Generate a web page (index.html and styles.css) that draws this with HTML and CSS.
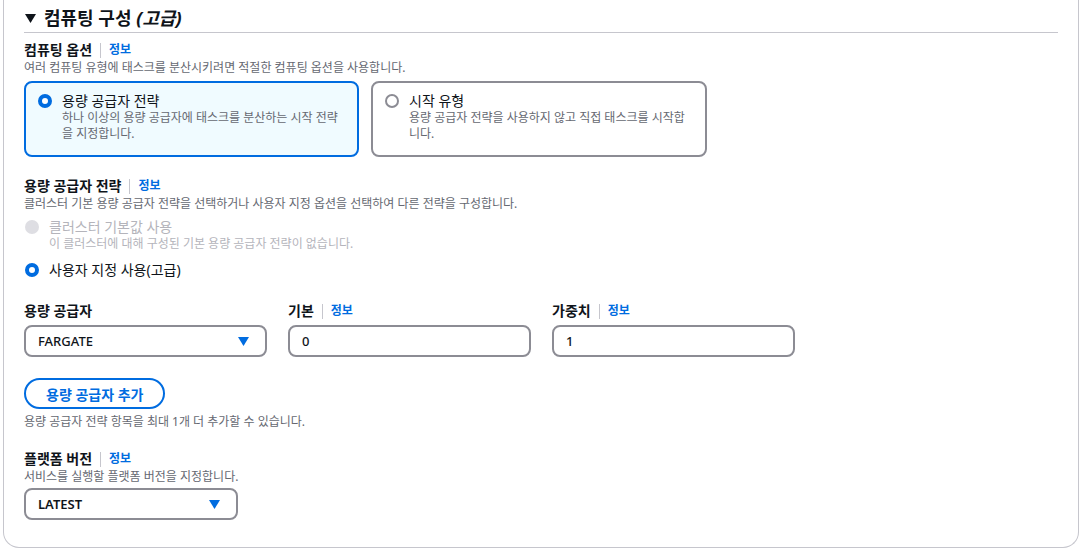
FILE: index.html
```html
<!DOCTYPE html>
<html lang="ko">
<head>
<meta charset="utf-8">
<link rel="stylesheet" href="styles.css">
</head>
<body>
<div class="panel">
  <div class="title">
    <svg class="caret-down" width="11" height="9" viewBox="0 0 11 9"><polygon points="0,0 11,0 5.5,9" fill="#0f141a"/></svg>
    <span>컴퓨팅 구성 <em>(고급)</em></span>
  </div>

  <div class="field first">
    <div class="label">컴퓨팅 옵션<span class="sep"></span><a class="info">정보</a></div>
    <div class="desc">여러 컴퓨팅 유형에 태스크를 분산시키려면 적절한 컴퓨팅 옵션을 사용합니다.</div>
    <div class="tiles">
      <div class="tile selected">
        <span class="radio on"></span>
        <div class="tile-text">
          <div class="opt">용량 공급자 전략</div>
          <div class="desc">하나 이상의 용량 공급자에 태스크를 분산하는 시작 전략을 지정합니다.</div>
        </div>
      </div>
      <div class="tile">
        <span class="radio"></span>
        <div class="tile-text">
          <div class="opt">시작 유형</div>
          <div class="desc">용량 공급자 전략을 사용하지 않고 직접 태스크를 시작합니다.</div>
        </div>
      </div>
    </div>
  </div>

  <div class="field strategy">
    <div class="label">용량 공급자 전략<span class="sep"></span><a class="info">정보</a></div>
    <div class="desc">클러스터 기본 용량 공급자 전략을 선택하거나 사용자 지정 옵션을 선택하여 다른 전략을 구성합니다.</div>
    <div class="option disabled">
      <span class="radio dis"></span>
      <div>
        <div class="opt">클러스터 기본값 사용</div>
        <div class="desc">이 클러스터에 대해 구성된 기본 용량 공급자 전략이 없습니다.</div>
      </div>
    </div>
    <div class="option custom">
      <span class="radio on"></span>
      <div class="opt">사용자 지정 사용(고급)</div>
    </div>
  </div>

  <div class="row">
    <div class="col">
      <div class="label">용량 공급자</div>
      <div class="input select"><span>FARGATE</span><svg width="11" height="9" viewBox="0 0 11 9"><polygon points="0,0 11,0 5.5,9" fill="#006ce0"/></svg></div>
    </div>
    <div class="col">
      <div class="label">기본<span class="sep"></span><a class="info">정보</a></div>
      <div class="input"><span>0</span></div>
    </div>
    <div class="col">
      <div class="label">가중치<span class="sep"></span><a class="info">정보</a></div>
      <div class="input"><span>1</span></div>
    </div>
  </div>

  <button class="btn">용량 공급자 추가</button>
  <div class="desc hint">용량 공급자 전략 항목을 최대 1개 더 추가할 수 있습니다.</div>

  <div class="field platform">
    <div class="label">플랫폼 버전<span class="sep"></span><a class="info">정보</a></div>
    <div class="desc">서비스를 실행할 플랫폼 버전을 지정합니다.</div>
    <div class="input select latest"><span>LATEST</span><svg width="11" height="9" viewBox="0 0 11 9"><polygon points="0,0 11,0 5.5,9" fill="#006ce0"/></svg></div>
  </div>
</div>
</body>
</html>
```

FILE: styles.css
```css
* { box-sizing: border-box; }
html, body { margin: 0; padding: 0; background: #ffffff; }
body {
  font-family: "Noto Sans", "Noto Sans CJK KR", sans-serif;
  color: #0f141a;
  width: 1082px;
  height: 550px;
  overflow: hidden;
}
.panel {
  margin: 0 3px 0 3px;
  width: 1076px;
  border: 1px solid #c6c6cd;
  border-top: none;
  border-radius: 0 0 16px 16px;
  padding: 0 20px 27px 20px;
}
.title {
  display: flex;
  align-items: center;
  gap: 8px;
  padding: 7px 0 3px 1px;
  line-height: 22px;
  font-size: 18px;
  font-weight: 700;
  border-bottom: 1px solid #c6c6cd;
}
.title em { font-style: italic; }
.caret-down { display: block; }
.label {
  display: flex;
  align-items: center;
  font-size: 14px;
  font-weight: 700;
  line-height: 20px;
}
.sep {
  display: inline-block;
  width: 1px;
  height: 15px;
  background: #c6c6cd;
  margin: 0 8px;
}
.info {
  color: #006ce0;
  font-size: 12px;
  font-weight: 700;
}
.desc {
  font-size: 12px;
  line-height: 16px;
  color: #656871;
}
.field.first { margin-top: 7px; }
.tiles {
  display: grid;
  grid-template-columns: 335px 336px;
  gap: 12px;
  margin-top: 5px;
}
.tile {
  display: flex;
  align-items: flex-start;
  gap: 10px;
  border: 2px solid #8c8c94;
  border-radius: 8px;
  padding: 9px 12px 13px 12px;
  background: #ffffff;
}
.tile.selected {
  border-color: #006ce0;
  background: #f0fbff;
}
.opt {
  font-size: 14px;
  line-height: 18px;
}
.radio {
  flex: none;
  width: 14px;
  height: 14px;
  border-radius: 50%;
  border: 2px solid #8c8c94;
  background: #ffffff;
  margin-top: 2px;
}
.radio.on { border: 4px solid #006ce0; }
.radio.dis { border: none; background: #dedee3; }
.field.strategy { margin-top: 19px; }
.option {
  display: flex;
  align-items: flex-start;
  gap: 10px;
  margin-top: 6px;
  padding-left: 1px;
}
.option.disabled .opt,
.option.disabled .desc { color: #b4b4bb; }
.option.custom { margin-top: 9px; }
.row {
  display: grid;
  grid-template-columns: 243px 243px 243px;
  gap: 21px;
  margin-top: 22px;
}
.col .label { margin-bottom: 4px; }
.input {
  display: flex;
  align-items: center;
  justify-content: space-between;
  height: 32px;
  border: 2px solid #8c8c94;
  border-radius: 8px;
  padding: 0 16px 0 12px;
  font-size: 13px;
  font-weight: 500;
  color: #0f141a;
  background: #ffffff;
}
.input svg { display: block; }
.btn {
  display: block;
  margin-top: 21px;
  height: 31px;
  padding: 0 20px;
  border: 2px solid #006ce0;
  border-radius: 20px;
  background: #ffffff;
  color: #006ce0;
  font-family: inherit;
  font-size: 14px;
  font-weight: 700;
}
.hint { margin-top: 5px; }
.field.platform { margin-top: 19px; }
.field.platform .desc { margin-bottom: 3px; }
.input.latest { width: 214px; font-weight: 600; }
```
